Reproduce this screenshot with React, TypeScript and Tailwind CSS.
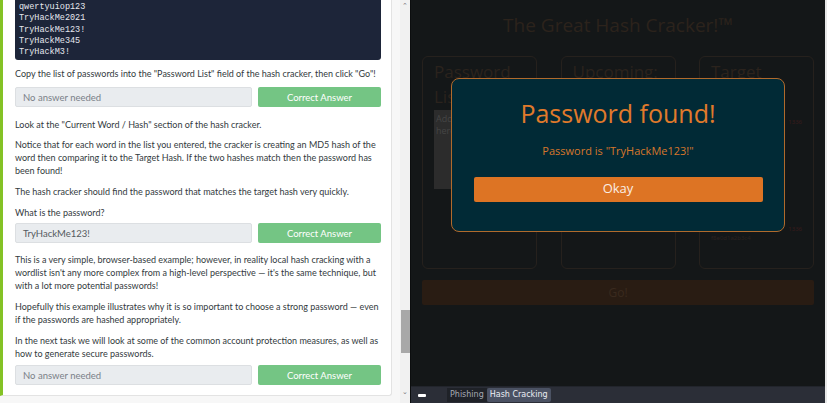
import React from 'react';

const codeLines = ['qwertyuiop123', 'TryHackMe2021', 'TryHackMe123!', 'TryHackMe345', 'TryHackM3!'];

function AnswerRow({ value, placeholder }: { value?: string; placeholder?: string }) {
    return (
        <div className="flex gap-[6px] h-[20px]">
            <div className="w-[237px] h-full bg-[#e9ecef] border border-[#dcdfe2] rounded-[2px] flex items-center pl-[7px] text-[9.5px]">
                {value ? <span className="text-[#555a60]">{value}</span> : <span className="text-[#7a8088]">{placeholder}</span>}
            </div>
            <div className="w-[123px] h-full bg-[#74c584] rounded-[2px] flex items-center justify-center text-white text-[9.5px]">
                Correct Answer
            </div>
        </div>
    );
}

function TaskPanel() {
    return (
        <div className="w-[410px] h-[403px] flex bg-[#f7f7f7] shrink-0" style={{ fontFamily: 'Lato, "Noto Sans", sans-serif' }}>
            <div className="w-[392px] h-[396px] bg-white border-l-[3px] border-l-[#84c225] border-r border-b border-[#e3e3e3] rounded-br-[3px] pl-[12px] pr-[10px] text-[#333a40] text-[9px] leading-[13px]">
                <div className="h-[60px] bg-[#1d2539] rounded-b-[3px] pl-[4px] pt-[2px] text-[#e6e8ee] font-['Liberation_Mono',monospace] text-[8.5px] leading-[11.3px]">
                    {codeLines.map((l) => (
                        <div key={l}>{l}</div>
                    ))}
                </div>
                <p className="mt-[7px] mb-[7px]">Copy the list of passwords into the "Password List" field of the hash cracker, then click "Go"!</p>
                <AnswerRow placeholder="No answer needed" />
                <p className="mt-[11px]">Look at the "Current Word / Hash" section of the hash cracker.</p>
                <p className="mt-[7px]">
                    Notice that for each word in the list you entered, the cracker is creating an MD5 hash of the word then comparing it to the Target Hash. If the two hashes match then the password has been found!
                </p>
                <p className="mt-[8px]">The hash cracker should find the password that matches the target hash very quickly.</p>
                <p className="mt-[8px] mb-[4px]">What is the password?</p>
                <AnswerRow value="TryHackMe123!" />
                <p className="mt-[10px]">
                    This is a very simple, browser-based example; however, in reality local hash cracking with a wordlist isn't any more complex from a high-level perspective — it's the same technique, but with a lot more potential passwords!
                </p>
                <p className="mt-[8px]">
                    Hopefully this example illustrates why it is so important to choose a strong password — even if the passwords are hashed appropriately.
                </p>
                <p className="mt-[8px] mb-[5px]">
                    In the next task we will look at some of the common account protection measures, as well as how to generate secure passwords.
                </p>
                <AnswerRow placeholder="No answer needed" />
            </div>
            <div className="w-[10px] ml-[8px] h-full bg-[#f1f1f1] flex flex-col items-center text-[#777] text-[7px] leading-none">
                <span className="mt-[2px]">&#8963;</span>
                <div className="flex-1" />
                <div className="w-[9px] h-[43px] bg-[#a8a8a8]" />
                <div className="h-[35px]" />
                <span className="mb-[8px]">&#8964;</span>
            </div>
        </div>
    );
}

function CrackerBox({ title, children }: { title: React.ReactNode; children?: React.ReactNode }) {
    return (
        <div className="w-[115px] h-[213px] border border-[#26211d] rounded-[6px] px-[11px] pt-[2px] text-[#2b231d]">
            <div className="text-[17px] leading-[25px]" style={{ fontFamily: '"Open Sans", sans-serif' }}>{title}</div>
            {children}
        </div>
    );
}

function CrackerPanel() {
    return (
        <div className="relative flex-1 h-[403px] flex flex-col bg-[#141718] border-l border-[#0c0e0f] border-r-2 border-r-[#e8e8e8]">
            <div className="flex-1 px-[11px]">
                <div className="text-center text-[#2c231c] text-[19px] pt-[11px] h-[56px]" style={{ fontFamily: '"Open Sans", sans-serif' }}>
                    The Great Hash Cracker!™
                </div>
                <div className="flex justify-between">
                    <CrackerBox title={<>Password<br />List</>}>
                        <div className="mt-[1px] h-[79px] bg-[#2c2c2c] px-[2px] pt-[3px] text-[#454545] text-[9px] leading-[12px]" style={{ fontFamily: '"Open Sans", sans-serif' }}>
                            Add passwords<br />here
                        </div>
                    </CrackerBox>
                    <CrackerBox title="Upcoming:" />
                    <CrackerBox title="Target">
                        <div className="text-right text-[#3a1c1c] text-[6px] mt-[34px]">1336</div>
                        <div className="text-right text-[#3a1c1c] text-[6px] mt-[98px]">1336</div>
                        <div className="text-[#2a2220] text-[6px]">f8e0d1a2b3c4</div>
                    </CrackerBox>
                </div>
                <div className="mt-[11px] h-[25px] bg-[#291c13] rounded-[2px] flex items-center justify-center text-[#3a2a1e] text-[12px]" style={{ fontFamily: '"Open Sans", sans-serif' }}>
                    Go!
                </div>
            </div>
            <div className="h-[17px] bg-[#2b2e37] border-t border-[#22252c] flex items-center text-[8px]" style={{ fontFamily: '"DejaVu Sans", sans-serif' }}>
                <div className="w-[8px] h-[3px] bg-white rounded-[1px] ml-[7px] mr-[21px]" />
                <div className="h-[14px] px-[3px] bg-[#1f2228] text-[#a6aab3] flex items-center">Phishing</div>
                <div className="h-[14px] px-[3px] bg-[#4b5263] text-[#eceef3] rounded-[2px] flex items-center">Hash Cracking</div>
            </div>

            <div className="absolute left-[40px] top-[78px] w-[334px] h-[154px] bg-[#012a36] border border-[#b06a2c] rounded-[8px] flex flex-col items-center" style={{ fontFamily: '"Open Sans", sans-serif' }}>
                <div className="mt-[17px] text-[25px] leading-[34px] text-[#e07a2b]">Password found!</div>
                <div className="mt-[13px] text-[11px] text-[#d7772b]">Password is "TryHackMe123!"</div>
                <div className="mt-[17px] w-[289px] h-[25px] bg-[#dd7424] rounded-[2px] flex items-center justify-center text-[#fbeee4] text-[13px]">
                    Okay
                </div>
            </div>
        </div>
    );
}

export default function App() {
    return (
        <div className="w-[827px] h-[403px] flex overflow-hidden">
            <TaskPanel />
            <CrackerPanel />
        </div>
    );
}
